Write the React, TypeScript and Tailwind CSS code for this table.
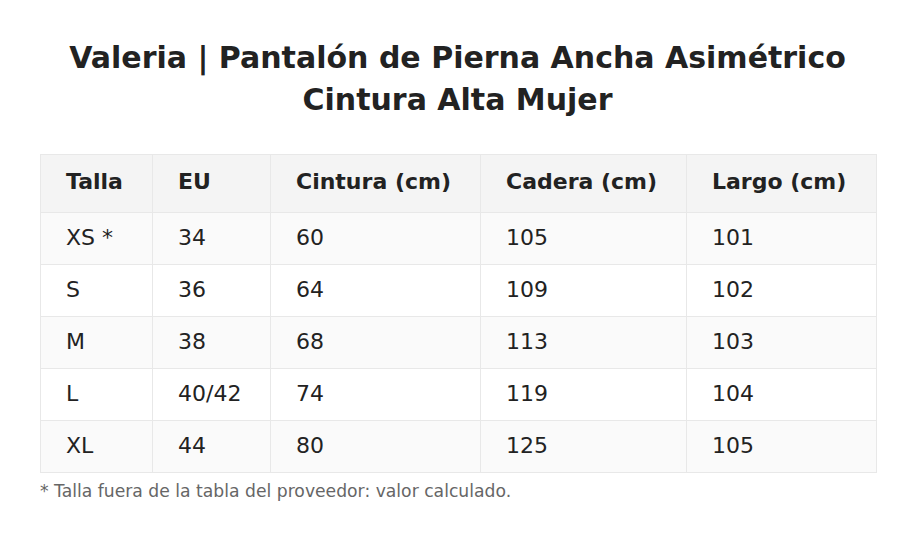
import React from "react";

const rows = [
  ["XS *", "34", "60", "105", "101"],
  ["S", "36", "64", "109", "102"],
  ["M", "38", "68", "113", "103"],
  ["L", "40/42", "74", "119", "104"],
  ["XL", "44", "80", "125", "105"],
];

const heads = ["Talla", "EU", "Cintura (cm)", "Cadera (cm)", "Largo (cm)"];
const widths = ["w-[112px]", "w-[118px]", "w-[210px]", "w-[206px]", "w-[190px]"];

export default function App() {
  return (
    <div className="w-[915px] h-[545px] bg-white px-[40px] pt-[37px] text-[#222]" style={{ fontFamily: '"DejaVu Sans", Verdana, sans-serif' }}>
      <h1 className="text-center text-[30px] font-bold leading-[42px] text-[#222]">
        Valeria | Pantalón de Pierna Ancha Asimétrico
        <br />
        Cintura Alta Mujer
      </h1>
      <table className="mt-[33px] w-[836px] border-collapse table-fixed">
        <thead>
          <tr className="bg-[#f4f4f4]">
            {heads.map((h, i) => (
              <th key={h} className={`${widths[i]} h-[58px] border border-[#e8e8e8] pl-[25px] pb-[4px] text-left text-[22px] font-bold`}>
                {h}
              </th>
            ))}
          </tr>
        </thead>
        <tbody>
          {rows.map((r, ri) => (
            <tr key={ri} className={ri % 2 === 0 ? "bg-[#fafafa]" : "bg-white"}>
              {r.map((c, ci) => (
                <td key={ci} className="h-[52px] border border-[#e8e8e8] pl-[25px] pb-[3px] text-[22px]">
                  {c}
                </td>
              ))}
            </tr>
          ))}
        </tbody>
      </table>
      <p className="mt-[6px] text-[17.2px] leading-[24px] text-[#666]">* Talla fuera de la tabla del proveedor: valor calculado.</p>
    </div>
  );
}
